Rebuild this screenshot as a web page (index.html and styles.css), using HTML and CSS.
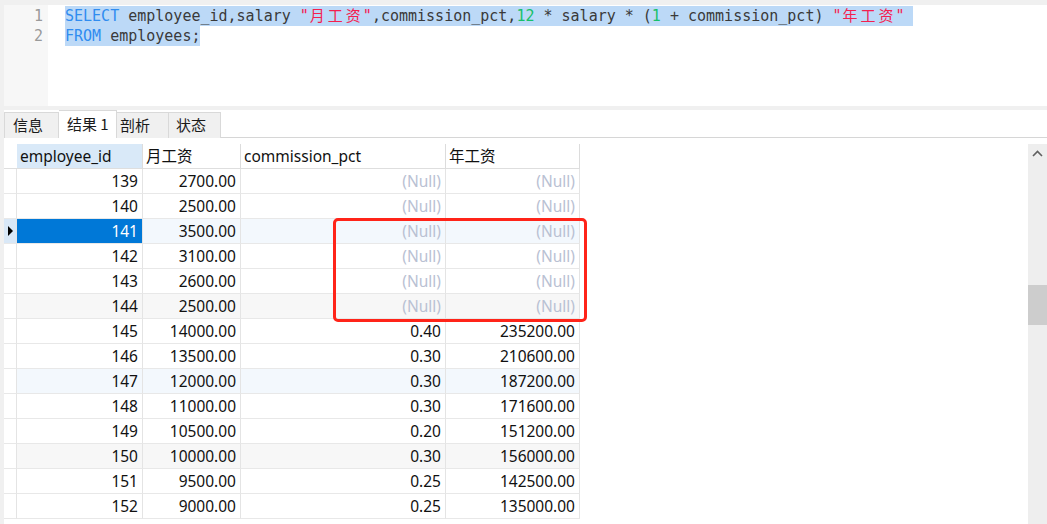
FILE: index.html
```html
<!DOCTYPE html>
<html lang="zh">
<head>
<meta charset="utf-8">
<title>Query</title>
<link rel="stylesheet" href="styles.css">
</head>
<body>
<div class="editor">
  <div class="gutter">
    <div class="ln">1</div>
    <div class="ln">2</div>
  </div>
  <div class="code">
    <div class="line"><span class="sel pad"><span class="kw">SELECT</span> employee_id,salary <span class="str">"<span class="cjk">月工资</span>"</span>,commission_pct,<span class="num">12</span> * salary * (<span class="num">1</span> + commission_pct) <span class="str">"<span class="cjk">年工资</span>"</span></span></div>
    <div class="line"><span class="sel"><span class="kw">FROM</span> employees;</span></div>
  </div>
</div>
<div class="results">
  <div class="tabs">
    <div class="tab t1">信息</div>
    <div class="tab active t2">结果 1</div>
    <div class="tab t3">剖析</div>
    <div class="tab t4">状态</div>
  </div>
  <div class="body">
    <div class="grid">
      <div class="row head">
        <div class="c ind"></div>
        <div class="c hl">employee_id</div>
        <div class="c">月工资</div>
        <div class="c">commission_pct</div>
        <div class="c">年工资</div>
      </div>
      <div class="row"><div class="c ind"></div><div class="c r">139</div><div class="c r">2700.00</div><div class="c r null">(Null)</div><div class="c r null">(Null)</div></div>
      <div class="row"><div class="c ind"></div><div class="c r">140</div><div class="c r">2500.00</div><div class="c r null">(Null)</div><div class="c r null">(Null)</div></div>
      <div class="row tint cur"><div class="c ind"><span class="arrow"></span></div><div class="c r selcell">141</div><div class="c r">3500.00</div><div class="c r null">(Null)</div><div class="c r null">(Null)</div></div>
      <div class="row"><div class="c ind"></div><div class="c r">142</div><div class="c r">3100.00</div><div class="c r null">(Null)</div><div class="c r null">(Null)</div></div>
      <div class="row"><div class="c ind"></div><div class="c r">143</div><div class="c r">2600.00</div><div class="c r null">(Null)</div><div class="c r null">(Null)</div></div>
      <div class="row alt"><div class="c ind"></div><div class="c r">144</div><div class="c r">2500.00</div><div class="c r null">(Null)</div><div class="c r null">(Null)</div></div>
      <div class="row"><div class="c ind"></div><div class="c r">145</div><div class="c r">14000.00</div><div class="c r">0.40</div><div class="c r">235200.00</div></div>
      <div class="row"><div class="c ind"></div><div class="c r">146</div><div class="c r">13500.00</div><div class="c r">0.30</div><div class="c r">210600.00</div></div>
      <div class="row tint"><div class="c ind"></div><div class="c r">147</div><div class="c r">12000.00</div><div class="c r">0.30</div><div class="c r">187200.00</div></div>
      <div class="row"><div class="c ind"></div><div class="c r">148</div><div class="c r">11000.00</div><div class="c r">0.30</div><div class="c r">171600.00</div></div>
      <div class="row"><div class="c ind"></div><div class="c r">149</div><div class="c r">10500.00</div><div class="c r">0.20</div><div class="c r">151200.00</div></div>
      <div class="row alt"><div class="c ind"></div><div class="c r">150</div><div class="c r">10000.00</div><div class="c r">0.30</div><div class="c r">156000.00</div></div>
      <div class="row"><div class="c ind"></div><div class="c r">151</div><div class="c r">9500.00</div><div class="c r">0.25</div><div class="c r">142500.00</div></div>
      <div class="row"><div class="c ind"></div><div class="c r">152</div><div class="c r">9000.00</div><div class="c r">0.25</div><div class="c r">135000.00</div></div>
    </div>
    <div class="scroll">
      <div class="sb-btn">
        <svg width="11" height="7" viewBox="0 0 11 7"><path d="M1 6 L5.5 1.5 L10 6" fill="none" stroke="#606060" stroke-width="1.6"/></svg>
      </div>
      <div class="sb-track-top"></div>
      <div class="sb-thumb"></div>
      <div class="sb-track"></div>
    </div>
  </div>
  <div class="mark"></div>
</div>
</body>
</html>
```

FILE: styles.css
```css
* { box-sizing: border-box; }
html, body {
  margin: 0;
  padding: 0;
  width: 1047px;
  height: 524px;
  overflow: hidden;
  background: #f0f0f0;
}
body {
  padding-top: 5px;
}
.editor {
  margin-left: 4px;
  height: 101px;
  display: flex;
  background: #ffffff;
}
.gutter {
  width: 44px;
  background: #f7f7f7;
  padding-top: 1px;
  padding-right: 5px;
  font-family: "DejaVu Sans Mono", monospace;
  font-size: 15px;
  color: #9a9a9a;
  text-align: right;
}
.ln {
  height: 20px;
  line-height: 20px;
}
.code {
  flex: 1;
  padding-top: 1px;
  padding-left: 17px;
  font-family: "DejaVu Sans Mono", "Noto Sans CJK SC", monospace;
  font-size: 15px;
  color: #3a3a3a;
}
.line {
  height: 20px;
  line-height: 20px;
  white-space: pre;
  overflow: hidden;
}
.sel {
  background: #bcd9f7;
  display: inline-block;
  vertical-align: top;
  height: 20px;
  line-height: 20px;
}
.sel.pad { padding-right: 8px; }
.kw { color: #2f8cf0; }
.num { color: #17c06a; }
.str { color: #f4204f; }
.cjk {
  font-size: 15px;
  line-height: 20px;
  letter-spacing: 3px;
  padding-left: 1px;
  margin-right: -1px;
}

.results {
  position: relative;
  margin-top: 4px;
  margin-left: 4px;
  height: 414px;
  background: #ffffff;
  font-family: "Noto Sans", "Noto Sans CJK SC", sans-serif;
  font-size: 15.5px;
  color: #111111;
}
.tabs {
  display: flex;
  align-items: flex-end;
  height: 28px;
  border-bottom: 1px solid #d6d6d6;
  background: #ffffff;
}
.tab {
  height: 26px;
  line-height: 23px;
  background: #f0f0f0;
  border-top: 1px solid #d9d9d9;
  border-right: 1px solid #d9d9d9;
  font-family: "Noto Sans CJK SC", sans-serif;
  font-size: 15px;
  color: #1a1a1a;
  padding-left: 8px;
  margin-bottom: -1px;
}
.t1 { width: 55px; border-left: 1px solid #d9d9d9; }
.t2 { width: 58px; }
.t3 { width: 52px; padding-left: 3px; }
.t4 { width: 52px; padding-left: 7px; }
.tab.active {
  height: 28px;
  line-height: 25px;
  background: #ffffff;
}

.body {
  display: flex;
  height: 386px;
}
.grid {
  flex: 1;
  padding-top: 6px;
}
.row {
  display: grid;
  grid-template-columns: 13px 126px 98px 205px 134px;
  height: 25px;
}
.c {
  border-right: 1px solid #e4e4e4;
  border-bottom: 1px solid #e8e8e8;
  padding: 0 4px 0 3px;
  line-height: 24px;
  white-space: nowrap;
  overflow: hidden;
}
.c.r { text-align: right; }
.c.ind {
  padding: 0;
  border-right: 1px solid #e4e4e4;
  position: relative;
}
.head .c {
  border-bottom: 1px solid #dedede;
  border-right: 1px solid #dcdcdc;
}
.head .c.ind { border-right: none; }
.c.hl { background: #d9e9f8; }
.row.alt .c { background: #f7f7f7; }
.row.alt .c.ind { background: #ffffff; }
.row.tint .c { background: #f3f8fd; }
.row.tint .c.ind { background: #ffffff; }
.row.cur .c.ind { background: #d9e8f7; }
.row.cur .c.selcell {
  background: #0078d7;
  color: #ffffff;
}
.arrow {
  position: absolute;
  left: 4px;
  top: 7px;
  width: 0;
  height: 0;
  border-top: 5px solid transparent;
  border-bottom: 5px solid transparent;
  border-left: 5px solid #000000;
}
.null { color: #b9c1d3; }

.scroll {
  width: 19px;
  margin-top: 6px;
  background: #eeeeee;
  display: flex;
  flex-direction: column;
}
.sb-btn {
  height: 17px;
  display: flex;
  justify-content: center;
  align-items: center;
  padding-top: 2px;
}
.sb-track-top { height: 124px; }
.sb-thumb {
  height: 40px;
  background: #cdcdcd;
}
.sb-track { flex: 1; }

.mark {
  position: absolute;
  left: 329px;
  top: 108px;
  width: 254px;
  height: 104px;
  border: 3px solid #ff2419;
  border-radius: 5px;
}
```
